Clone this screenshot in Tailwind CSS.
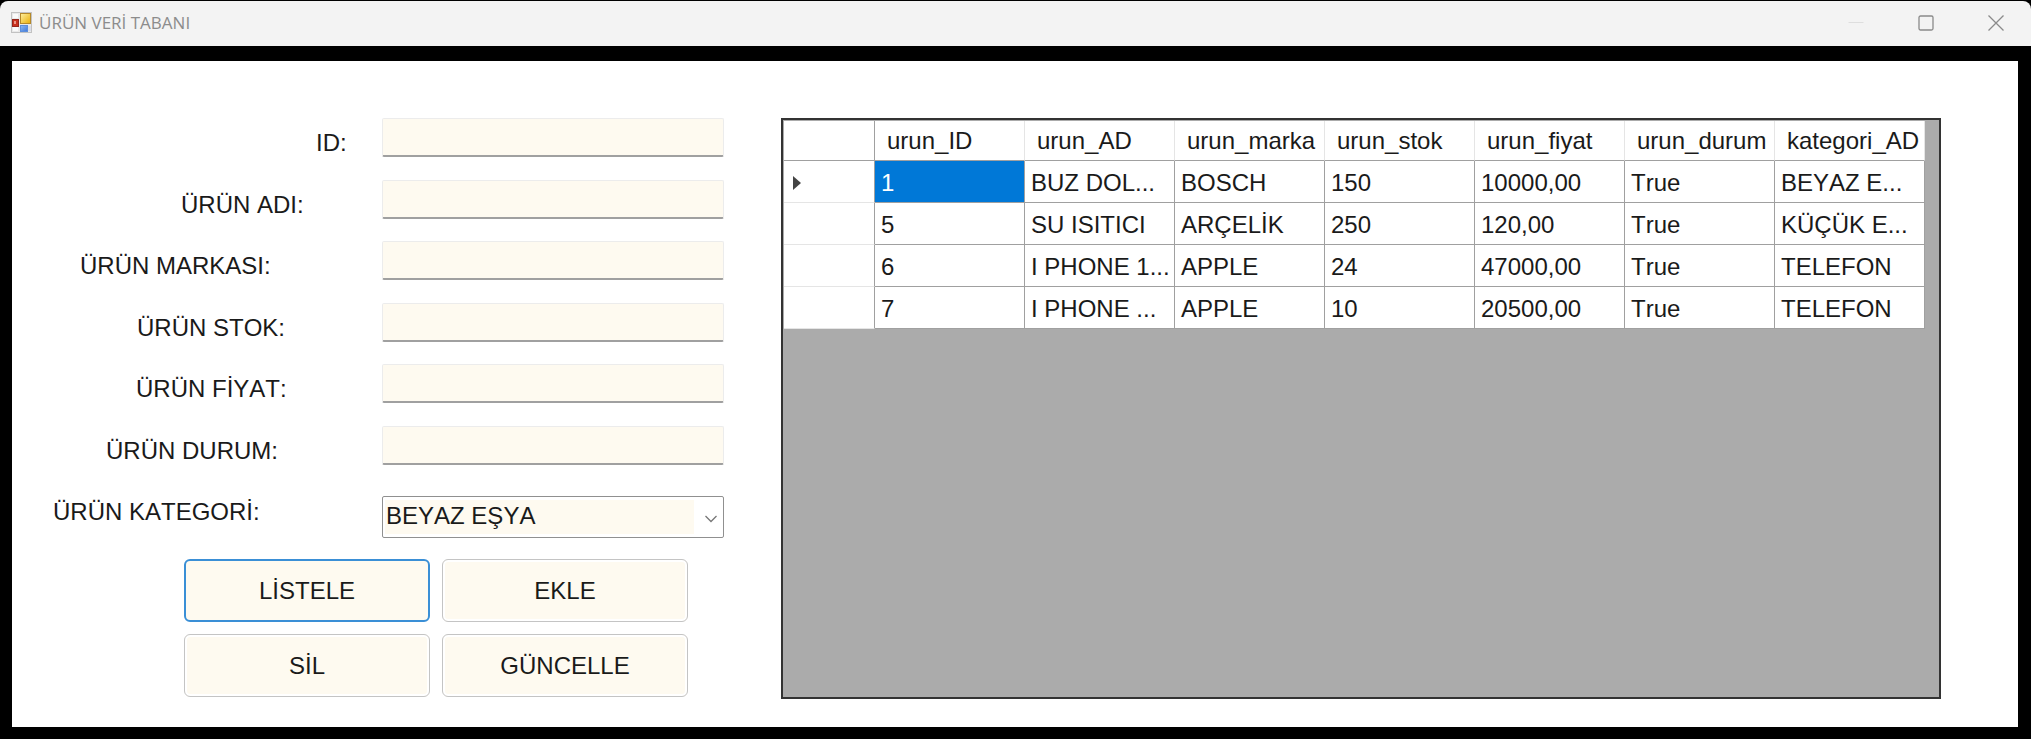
<!DOCTYPE html>
<html lang="tr">
<head>
<meta charset="utf-8">
<title>ÜRÜN VERİ TABANI</title>
<script src="https://cdn.jsdelivr.net/npm/@tailwindcss/browser@4"></script>
</head>
<body class="min-h-screen flex flex-col bg-black pt-px font-['Liberation_Sans',Arial,sans-serif] text-2xl text-[#1a1a1a] [font-kerning:none]">
  <header class="flex items-center h-[45px] shrink-0 rounded-t-lg bg-[#f3f3f3] pl-[11px] pb-[2px]">
    <svg class="size-[21px] shrink-0" viewBox="0 0 21 21" aria-hidden="true">
      <defs>
        <linearGradient id="gold" x1="0" y1="0" x2="1" y2="1"><stop offset="0" stop-color="#fff0a0"/><stop offset="1" stop-color="#e9ae08"/></linearGradient>
        <linearGradient id="blue" x1="0" y1="0" x2="1" y2="1"><stop offset="0" stop-color="#8db8f5"/><stop offset="1" stop-color="#3f78d8"/></linearGradient>
      </defs>
      <rect x=".5" y=".5" width="20" height="20" fill="#e9e9e9" stroke="#c2c2c2"/>
      <rect x="2" y="2" width="5" height="4" fill="#fafafa"/>
      <rect x="2" y="15" width="5" height="4" fill="#fafafa"/>
      <rect x="17" y="14" width="3" height="5" fill="#d9dde8"/>
      <rect x="1.500" y="7.500" width="6" height="7" fill="#c8301e" stroke="#93261c"/>
      <rect x="3" y="9" width="2" height="3" fill="#ec9484"/>
      <rect x="9.500" y="1.500" width="10" height="10" fill="url(#gold)" stroke="#b5892a"/>
      <rect x="9.500" y="13.500" width="7" height="6" fill="url(#blue)" stroke="#5c8edc"/>
    </svg>
    <h1 class="ml-[7px] font-['Open_Sans','Noto_Sans',sans-serif] text-[17px] leading-6 text-[#8c8c8c]">ÜRÜN VERİ TABANI</h1>
    <div class="ml-auto flex h-full">
      <button class="w-[70px] grid place-items-center" aria-label="Simge durumuna küçült" disabled>
        <svg class="size-4" viewBox="0 0 16 16"><path d="M.5 7.500h15" stroke="#dedede"/></svg>
      </button>
      <button class="w-[70px] grid place-items-center" aria-label="Ekranı kapla">
        <svg class="size-4" viewBox="0 0 16 16" fill="none"><rect x="1" y="1" width="14" height="14" rx="1.500" stroke="#8a8a8a" stroke-width="1.300"/></svg>
      </button>
      <button class="w-[70px] grid place-items-center" aria-label="Kapat">
        <svg class="size-4" viewBox="0 0 16 16"><path d="M.5.5l15 15M15.500.5l-15 15" stroke="#8a8a8a" stroke-width="1.300"/></svg>
      </button>
    </div>
  </header>

  <main class="flex-1 flex bg-white mt-[15px] mb-3 ml-3 mr-[13px] pt-[57px] pb-7 pr-[77px]">
    <form class="shrink-0 w-[769px]">
      <div class="grid grid-cols-[370px_342px] auto-rows-fr h-[431px]">
        <label for="id" class="pl-[304px] pt-[9px] leading-8">ID:</label>
        <input id="id" type="text" class="h-[39px] px-1 rounded-xs border border-[#ececec] border-b-2 border-b-[#a0a0a0] bg-[#fefaf0]">
        <label for="ad" class="pl-[169px] pt-[9px] leading-8">ÜRÜN ADI:</label>
        <input id="ad" type="text" class="h-[39px] px-1 rounded-xs border border-[#ececec] border-b-2 border-b-[#a0a0a0] bg-[#fefaf0]">
        <label for="marka" class="pl-[68px] pt-[9px] leading-8">ÜRÜN MARKASI:</label>
        <input id="marka" type="text" class="h-[39px] px-1 rounded-xs border border-[#ececec] border-b-2 border-b-[#a0a0a0] bg-[#fefaf0]">
        <label for="stok" class="pl-[125px] pt-[9px] leading-8">ÜRÜN STOK:</label>
        <input id="stok" type="text" class="h-[39px] px-1 rounded-xs border border-[#ececec] border-b-2 border-b-[#a0a0a0] bg-[#fefaf0]">
        <label for="fiyat" class="pl-[124px] pt-[9px] leading-8">ÜRÜN FİYAT:</label>
        <input id="fiyat" type="text" class="h-[39px] px-1 rounded-xs border border-[#ececec] border-b-2 border-b-[#a0a0a0] bg-[#fefaf0]">
        <label for="durum" class="pl-[94px] pt-[9px] leading-8">ÜRÜN DURUM:</label>
        <input id="durum" type="text" class="h-[39px] px-1 rounded-xs border border-[#ececec] border-b-2 border-b-[#a0a0a0] bg-[#fefaf0]">
        <label for="kategori" class="pl-[41px] pt-[9px] leading-8">ÜRÜN KATEGORİ:</label>
        <div class="flex items-center h-[42px] mt-[9px] pl-[2px] rounded-xs border border-[#909090] bg-white">
          <select id="kategori" class="appearance-none flex-1 h-[34px] pl-px pb-[2px] bg-[#fefaf0]">
            <option>BEYAZ EŞYA</option>
            <option>KÜÇÜK EV ALETLERİ</option>
            <option>TELEFON</option>
          </select>
          <svg class="w-3 h-2 ml-[11px] mr-[6px] mt-1" viewBox="0 0 12 8" fill="none" aria-hidden="true"><path d="M.5 1l5.500 5.500L11.500 1" stroke="#777" stroke-width="1.300"/></svg>
        </div>
      </div>
      <div class="grid grid-cols-[246px_246px] gap-3 mt-[10px] ml-[172px]">
        <button type="button" class="h-[63px] rounded-md border-2 border-[#3a8fd6] bg-[#fefaf0]">LİSTELE</button>
        <button type="button" class="h-[63px] rounded-md border border-[#c4c4c4] bg-[#fefaf0] ring-2 ring-inset ring-white">EKLE</button>
        <button type="button" class="h-[63px] rounded-md border border-[#c4c4c4] bg-[#fefaf0] ring-2 ring-inset ring-white">SİL</button>
        <button type="button" class="h-[63px] rounded-md border border-[#c4c4c4] bg-[#fefaf0] ring-2 ring-inset ring-white">GÜNCELLE</button>
      </div>
    </form>

    <section class="flex-1 border-2 border-[#333] bg-[#ababab] p-px" aria-label="Ürünler">
      <table class="table-fixed w-[1141px] border-separate border-spacing-0 bg-white whitespace-nowrap
        [&_th]:font-normal [&_th]:text-left [&_thead_th]:h-10 [&_thead_th]:pl-3 [&_thead_th]:border-b [&_thead_th]:border-b-[#a0a0a0] [&_thead_th]:border-r [&_thead_th]:border-r-[#e5e5e5]
        [&_tbody_th]:h-[42px] [&_tbody_th]:border-b [&_tbody_th]:border-b-[#e5e5e5] [&_tr>*:first-child]:border-r [&_tr>*:first-child]:border-r-[#a0a0a0]
        [&_td]:pl-[6px] [&_td]:pt-[2px] [&_td]:border-r [&_td]:border-b [&_td]:border-[#a0a0a0]">
        <colgroup><col class="w-[91px]"><col><col><col><col><col><col><col></colgroup>
        <thead>
          <tr><th></th><th scope="col">urun_ID</th><th scope="col">urun_AD</th><th scope="col">urun_marka</th><th scope="col">urun_stok</th><th scope="col">urun_fiyat</th><th scope="col">urun_durum</th><th scope="col">kategori_AD</th></tr>
        </thead>
        <tbody>
          <tr><th scope="row" aria-label="Seçili satır"><svg class="w-2 h-[14px] ml-[9px] mt-[2px]" viewBox="0 0 8 14"><path d="M0 0l8 7-8 7z" fill="#444"/></svg></th><td class="bg-[#0078d7] text-white">1</td><td>BUZ DOL...</td><td>BOSCH</td><td>150</td><td>10000,00</td><td>True</td><td>BEYAZ E...</td></tr>
          <tr><th></th><td>5</td><td>SU ISITICI</td><td>ARÇELİK</td><td>250</td><td>120,00</td><td>True</td><td>KÜÇÜK E...</td></tr>
          <tr><th></th><td>6</td><td>I PHONE 1...</td><td>APPLE</td><td>24</td><td>47000,00</td><td>True</td><td>TELEFON</td></tr>
          <tr><th></th><td>7</td><td>I PHONE ...</td><td>APPLE</td><td>10</td><td>20500,00</td><td>True</td><td>TELEFON</td></tr>
        </tbody>
      </table>
    </section>
  </main>
</body>
</html>
